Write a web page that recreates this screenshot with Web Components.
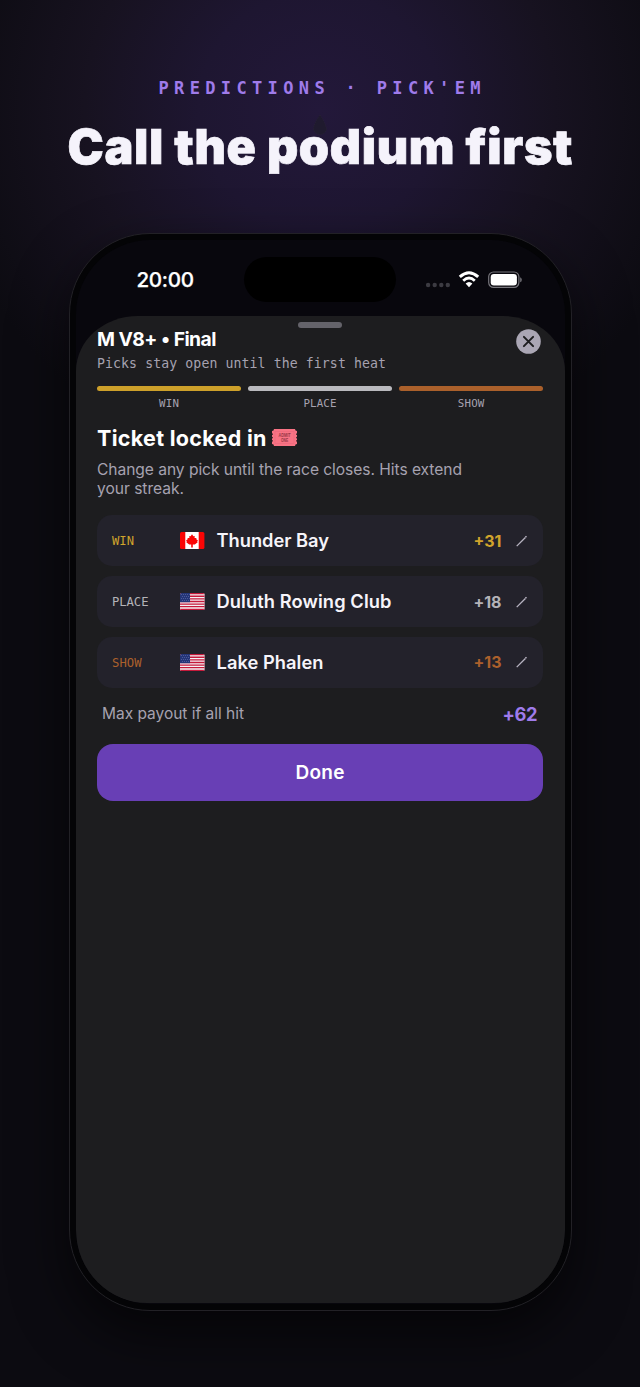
<!DOCTYPE html>
<html lang="en">
<head>
<meta charset="utf-8">
<title>Predictions</title>
<style>
html,body{margin:0;background:#0c0b11}
body{font-family:Inter,"Liberation Sans",sans-serif;color:#fff}
</style>
</head>
<body>
<promo-page></promo-page>
<script>
const define=(name,html,setup)=>customElements.define(name,class extends HTMLElement{
  connectedCallback(){
    if(this.shadowRoot)return;
    const root=this.attachShadow({mode:'open'});
    const t=document.createElement('template');
    t.innerHTML=typeof html==='function'?html(this):html;
    root.append(t.content.cloneNode(true));
    if(setup)setup(this,root);
  }
});

/* One line of text, tracked so that it spans the width given in px. */
define('fit-text',`<style>:host{display:block;white-space:nowrap;flex:none}span{display:inline-block}</style><span><slot></slot></span>`,(el,root)=>{
  const s=root.querySelector('span'),w=+el.getAttribute('w'),n=el.textContent.length;
  const natural=s.getBoundingClientRect().width;
  s.style.letterSpacing=((w-natural)/(n-1))+'px';
  el.style.width=w+'px';
});

const usa=`<svg width="25" height="17" viewBox="0 0 25 17"><defs><clipPath id="c"><rect width="24.6" height="17" rx="1.5"/></clipPath></defs><g clip-path="url(#c)"><rect width="25" height="17" fill="#f4f1f5"/><path d="M0 .65H25M0 3.27H25M0 5.89H25M0 8.5H25M0 11.1H25M0 13.7H25M0 16.35H25" stroke="#c5193a" stroke-width="1.3"/><rect width="10" height="9.2" fill="#243577"/><path d="M1 1.5H10M2 3.5H10M1 5.5H10M2 7.5H10" stroke="#7b82bb" stroke-width=".7" stroke-dasharray=".7 1.3"/></g></svg>`;
const canada=`<svg width="25" height="17" viewBox="0 0 25 17"><rect width="24.4" height="17" rx="1.5" fill="#fa0505"/><rect x="5.3" width="13.4" height="17" fill="#fff"/><path d="M12 2.2l1.4 2 1.3-.3-.1 2 1.7.2.2 1.5 1.4.6-.7 1.3.5.8-2.9 2.2-2 .1v3h-1.6v-3l-2-.1-2.9-2.2.5-.8-.7-1.3 1.4-.6.2-1.5 1.7-.2-.1-2 1.3.3z" fill="#fa0505"/></svg>`;

define('pick-row',el=>`<style>
:host{display:flex;align-items:center;box-sizing:border-box;height:50.8px;border-radius:15px;background:#23222b;padding:0 15px}
.rank{width:68px;padding-top:1px;color:${el.getAttribute('tone')};font:12.2px/20px "DejaVu Sans Mono",monospace}
.flag{width:25px;height:17px;margin-right:12px}
svg{display:block}
.name{flex:1;margin-left:-.5px;font:600 18.3px/24px Inter,sans-serif;color:#f6f4fa;margin-top:-1.5px}
.pts{color:${el.getAttribute('tone')};font:700 16px/20px Inter,sans-serif;margin-right:14.5px}
</style>
<div class="rank"><fit-text w="${el.getAttribute('rw')}">${el.getAttribute('rank')}</fit-text></div>
<div class="flag">${el.getAttribute('flag')==='ca'?canada:usa}</div>
<div class="name"><fit-text w="${el.getAttribute('nw')}">${el.getAttribute('name')}</fit-text></div>
<div class="pts"><fit-text w="28">${el.getAttribute('pts')}</fit-text></div>
<svg width="12" height="12" viewBox="0 0 12 12"><path d="M.7 11.1L9.4 2.5" stroke="#b8b4c2" stroke-width="1.3"/><path d="M9.4 2.3L10.5 1.2" stroke="#b8b4c2" stroke-width="1.5"/></svg>`);

define('podium-bar',el=>`<style>
:host{display:flex;flex-direction:column;align-items:center;flex:1}
i{display:block;width:100%;height:5px;border-radius:2.5px;background:${el.getAttribute('tone')}}
div{margin-top:7px;color:#a6a2b0;font:10.8px/12px "DejaVu Sans Mono",monospace}
</style><i></i><div><fit-text w="${el.getAttribute('w')}">${el.getAttribute('label')}</fit-text></div>`);

define('status-bar',`<style>
:host{display:flex;align-items:center;height:45px;padding:17px 43px 0 61px;box-sizing:content-box}
.time{font:500 20.6px/26px Inter,sans-serif;-webkit-text-stroke:.25px #fff}
.island{width:152.5px;height:45px;border-radius:23px;background:#000;margin:0 28.5px 0 49.5px;flex:none}
svg{display:block;flex:none}
</style>
<div class="time"><fit-text w="57.5">20:00</fit-text></div><div class="island"></div>
<svg width="98" height="20" viewBox="425 270 98 20">
<g fill="#3c3b42"><circle cx="428.1" cy="285" r="2.2"/><circle cx="434.7" cy="285" r="2.2"/><circle cx="441.3" cy="285" r="2.2"/><circle cx="447.8" cy="285" r="2.2"/></g>
<g fill="none" stroke="#fff"><path d="M459.8 276.9Q469 268.6 478.2 276.9" stroke-width="3"/><path d="M463.2 280.7Q469 275.4 474.8 280.7" stroke-width="2.8"/></g><path d="M465.6 283.5Q469 280.5 472.4 283.5L469 287.2Z" fill="#fff"/>
<rect x="488.7" y="272" width="30.2" height="15.4" rx="4.8" fill="none" stroke="#77767c" stroke-width="1.2"/><rect x="490.7" y="274" width="26.2" height="11.4" rx="3.2" fill="#fff"/><path d="M520.2 277.2Q521.8 277.7 521.8 279.7T520.2 282.2Z" fill="#77767c"/></svg>`);

define('ticket-icon',`<style>:host{display:block;width:25px;height:17px}svg{display:block}text{font:700 5.6px "Liberation Sans",sans-serif}</style>
<svg width="25" height="17" viewBox="0 0 25 17"><path d="M2 0H23A2 2 0 0 0 25 2V4.3A.8.8 0 0 0 25 6V7.7A.8.8 0 0 0 25 9.4V11A.8.8 0 0 0 25 12.7V15A2 2 0 0 0 23 17H2A2 2 0 0 0 0 15V12.7A.8.8 0 0 0 0 11V9.4A.8.8 0 0 0 0 7.7V6A.8.8 0 0 0 0 4.3V2A2 2 0 0 0 2 0Z" fill="#f97384"/><rect x="3" y="2.3" width="19" height="12.4" fill="none" stroke="#e7667a" stroke-width=".5"/><text x="6.5" y="8" textLength="12" lengthAdjust="spacingAndGlyphs" fill="#963746">ADMIT</text><text x="8.9" y="12.9" textLength="7.2" lengthAdjust="spacingAndGlyphs" fill="#963746">ONE</text></svg>`);

define('pick-sheet',`<style>
:host{display:block;box-sizing:border-box;height:987px;margin-top:14px;border-radius:62px 62px 71px 71px/55px 55px 71px 71px;background:#1d1d1f;padding:5.5px 21.5px 0 21.5px}
.handle{width:44px;height:6.5px;border-radius:4px;background:#64636a;margin:0 auto}
.head{display:flex;justify-content:space-between;height:57.5px}
.ttl{font:700 19.3px/24px Inter,sans-serif;margin-top:-1px}
.sub{font:13.2px/18px "DejaVu Sans Mono",monospace;color:#a6a2b0;margin-top:3.5px}
.close{display:block;margin:.5px 2px 0 0}
.bars{display:flex;gap:7.3px}
.locked{display:flex;align-items:center;gap:5.5px;height:28px;margin-top:14px;font:700 21.5px/28px Inter,sans-serif}
.copy{font:15.6px/19.3px Inter,sans-serif;color:#a6a2b0;margin-top:8.3px}
.rows{display:flex;flex-direction:column;gap:10px;margin-top:17px}
.max{display:flex;justify-content:space-between;align-items:center;height:24px;padding:0 5.5px 0 5px;margin-top:14.5px;font:15.5px/24px Inter,sans-serif;color:#a6a2b0}
.sum{font-weight:700;font-size:18.3px;color:#9f7bea;margin-top:-1px}
.btn{display:flex;align-items:center;justify-content:center;box-sizing:border-box;height:57px;padding-top:1px;border-radius:16px;background:#683fb5;margin-top:18px;font:600 19px/24px Inter,sans-serif}
</style>
<div class="handle"></div>
<div class="head"><div><div class="ttl"><fit-text w="119.5">M V8+ • Final</fit-text></div><div class="sub"><fit-text w="289">Picks stay open until the first heat</fit-text></div></div>
<svg class="close" width="25" height="25" viewBox="0 0 25 25"><circle cx="12.5" cy="12.5" r="12.3" fill="#aaa6b4"/><path d="M7.9 7.9L17.1 17.1M17.1 7.9L7.9 17.1" stroke="#1d1d1f" stroke-width="2" stroke-linecap="round"/></svg></div>
<div class="bars"><podium-bar tone="#cda02a" label="WIN" w="20"></podium-bar><podium-bar tone="#b9b9bd" label="PLACE" w="33"></podium-bar><podium-bar tone="#aa602b" label="SHOW" w="26.5"></podium-bar></div>
<div class="locked"><fit-text w="169.5">Ticket locked in</fit-text><ticket-icon></ticket-icon></div>
<div class="copy"><fit-text w="365">Change any pick until the race closes. Hits extend</fit-text><fit-text w="87">your streak.</fit-text></div>
<div class="rows">
<pick-row rank="WIN" rw="22" tone="#d1a42c" flag="ca" name="Thunder Bay" nw="112.5" pts="+31"></pick-row>
<pick-row rank="PLACE" rw="36.5" tone="#b4b3b8" flag="us" name="Duluth Rowing Club" nw="175" pts="+18"></pick-row>
<pick-row rank="SHOW" rw="29.5" tone="#ac602c" flag="us" name="Lake Phalen" nw="107" pts="+13"></pick-row>
</div>
<div class="max"><fit-text w="142">Max payout if all hit</fit-text><fit-text class="sum" w="35">+62</fit-text></div>
<div class="btn"><fit-text w="49">Done</fit-text></div>`);

define('phone-frame',`<style>
:host{display:block;box-sizing:border-box;width:503px;height:1077.5px;margin:58.5px 0 0 68.5px;border:1px solid #222126;border-radius:81px;background:#040406;padding:6px;box-shadow:0 22px 55px rgba(0,0,0,.62)}
div{height:1063.5px;border-radius:74px;background:#08070d;overflow:hidden}
</style><div><slot></slot></div>`);

define('promo-page',`<style>
:host{display:flow-root;position:relative;width:640px;height:1387px;overflow:hidden;background:radial-gradient(ellipse 380px 370px at 320px 110px,#23183a 0%,#1e1631 32%,#171220 62%,#0c0b11 100%)}
.kick{font:700 17px/24px "DejaVu Sans Mono",monospace;color:#9f7bea;padding:76px 0 0 158.5px}
.title{position:relative;font:900 48.5px/56px Inter,sans-serif;color:#f5f3fb;padding:18.5px 0 0 67.5px;-webkit-text-stroke:.7px #f5f3fb}
.flame{position:absolute;left:312px;top:114px}
</style>
<svg class="flame" width="16" height="24" viewBox="0 0 16 24"><path d="M8 1Q13 8 14.5 15A6.6 6.6 0 0 1 1.5 15Q2 9 8 1Z" fill="#1f1a2e" stroke="#2b2635" stroke-width=".7" stroke-dasharray="1 1"/></svg>
<div class="kick"><fit-text w="322">PREDICTIONS · PICK'EM</fit-text></div>
<div class="title"><fit-text w="505">Call the podium first</fit-text></div>
<phone-frame><status-bar></status-bar><pick-sheet></pick-sheet></phone-frame>`);
</script>
</body>
</html>
